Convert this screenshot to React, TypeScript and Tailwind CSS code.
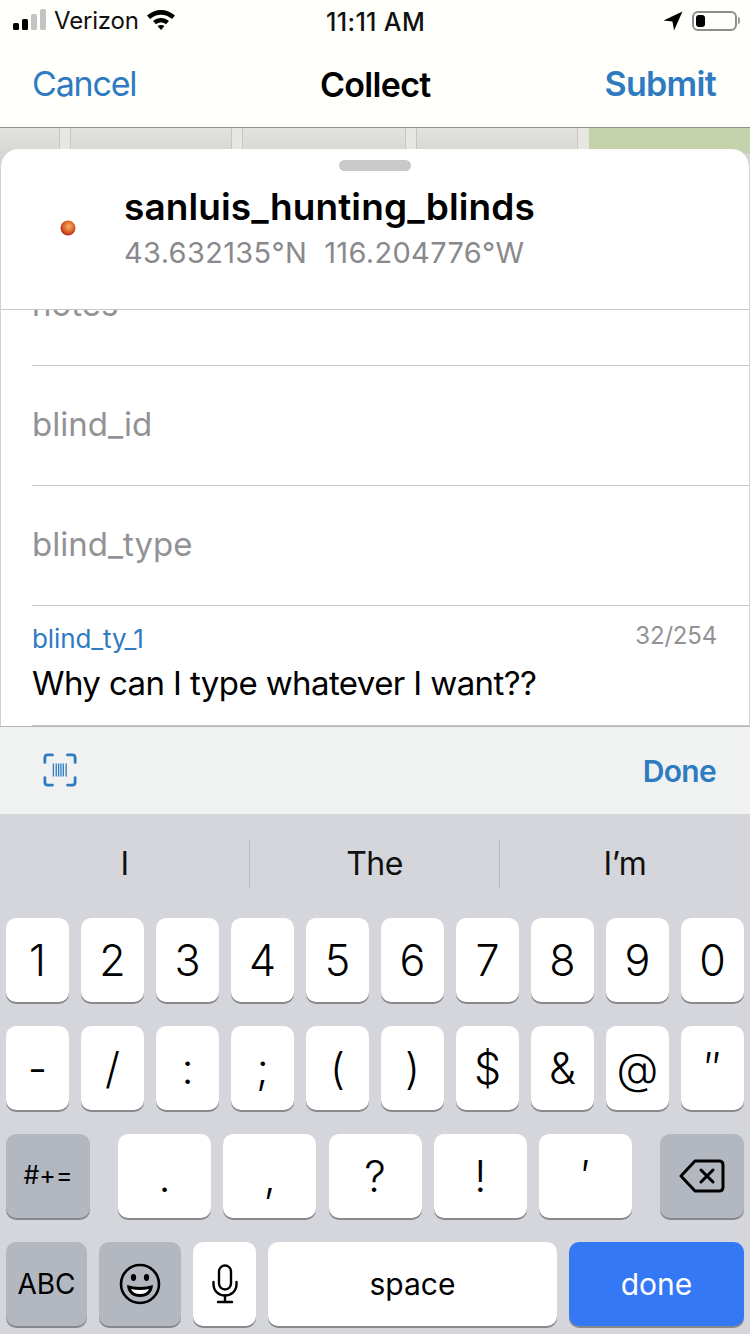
const row1 = ["1", "2", "3", "4", "5", "6", "7", "8", "9", "0"];
const row2 = ["-", "/", ":", ";", "(", ")", "$", "&", "@", "″"];
const row3 = [".", ",", "?", "!", "′"];

function Key({ label, className = "" }: { label: string; className?: string }) {
  return (
    <div
      className={`h-[84px] flex items-center justify-center rounded-[10px] bg-white shadow-[0_2px_0_#88898d] text-[43px] font-light text-black ${className}`}
    >
      {label}
    </div>
  );
}

function FormRow({ label, className = "" }: { label: string; className?: string }) {
  return (
    <div className={`ml-[31px] h-[120px] flex items-center border-b border-[#c8c8cb] pb-[2px] ${className}`}>
      <span className="text-[33px] text-[#929296]">{label}</span>
    </div>
  );
}

export default function App() {
  return (
    <div className="w-[750px] h-[1334px] overflow-hidden bg-white flex flex-col font-['Inter',sans-serif]">
      {/* Status + nav bar */}
      <div className="h-[128px] shrink-0 bg-[#fffffb] border-b border-[#8f928c] flex flex-col">
        <div className="h-[40px] flex items-center justify-between pt-[1px] relative">
          <div className="flex items-center pl-[13px]">
            <svg width="34" height="22" viewBox="0 0 34 22" className="mt-[-1px]">
              <rect x="0" y="14" width="6" height="7" rx="1.5" fill="#000" />
              <rect x="9" y="10" width="6" height="11" rx="1.5" fill="#000" />
              <rect x="18" y="5" width="6" height="16" rx="1.5" fill="#c4c4c4" />
              <rect x="27" y="0" width="6" height="21" rx="1.5" fill="#c4c4c4" />
            </svg>
            <span className="ml-[7px] text-[24px] text-[#111] tracking-[-0.2px]">Verizon</span>
            <svg width="30" height="22" viewBox="0 0 30 22" className="ml-[7px] mt-[-3px]">
              <path d="M1 7.5 C9 0 21 0 29 7.5 L26 11 C19.5 5.2 10.5 5.2 4 11 Z" fill="#000" />
              <path d="M7 13 C11.8 9 18.2 9 23 13 L20 16.3 C17 14 13 14 10 16.3 Z" fill="#000" />
              <path d="M15 22 L11.5 18 C13.5 16.6 16.5 16.6 18.5 18 Z" fill="#000" />
            </svg>
          </div>
          <span className="absolute left-[326px] top-[4px] text-[25px] font-medium text-[#111] tracking-[0.35px]">11:11 AM</span>
          <div className="flex items-center pr-[10px]">
            <svg width="20" height="20" viewBox="0 0 19 19" className="mr-[9px]">
              <path d="M18.5 0.5 L0.5 9 L9 10 L10.5 18.5 Z" fill="#000" />
            </svg>
            <div className="w-[45px] h-[20px] rounded-[6px] border-2 border-[#8d8d8d] p-[2px]">
              <div className="w-[9px] h-full rounded-[3px] bg-black" />
            </div>
            <div className="ml-[1px] w-[2px] h-[7px] rounded-r-sm bg-[#9a9a9a]" />
          </div>
        </div>
        <div className="flex-1 flex items-center justify-between pl-[32px] pr-[34px] relative">
          <span className="text-[34px] text-[#2f7bc1] tracking-[-1.2px]">Cancel</span>
          <span className="absolute left-[320px] top-[19px] text-[34px] font-semibold text-black tracking-[-0.7px]">Collect</span>
          <span className="text-[34px] font-semibold text-[#2f7bc1] tracking-[-0.7px]">Submit</span>
        </div>
      </div>

      {/* Map strip peeking behind the sheet */}
      <div className="h-[40px] shrink-0 flex bg-gradient-to-b from-[#e2e3df] to-[#d0d1cd]">
        <div className="w-[60px] border-r border-[#c6c7c3]" />
        <div className="w-[11px] bg-[#e6e6e3] border-r border-[#c6c7c3]" />
        <div className="w-[161px] border-r border-[#c6c7c3]" />
        <div className="w-[11px] bg-[#e6e6e3] border-r border-[#c6c7c3]" />
        <div className="w-[163px] border-r border-[#c6c7c3]" />
        <div className="w-[11px] bg-[#e6e6e3] border-r border-[#c6c7c3]" />
        <div className="w-[161px] border-r border-[#c6c7c3]" />
        <div className="w-[11px] bg-[#e6e6e3]" />
        <div className="flex-1 h-[25px] bg-[#c3d2ab]" />
      </div>

      {/* Sheet */}
      <div className="-mt-[19px] relative h-[577px] shrink-0 flex flex-col bg-white rounded-t-[18px] border-x border-[#d2d2d2] overflow-hidden">
        <div className="h-[161px] shrink-0 flex flex-col border-b border-[#c8c8cb]">
          <div className="mt-[11px] mx-auto w-[72px] h-[11px] rounded-full bg-[#c9c9c9]" />
          <div className="flex items-start mt-[14px]">
            <svg width="16" height="16" viewBox="0 0 16 16" className="ml-[59px] mt-[35px]">
              <defs>
                <radialGradient id="pin" cx="55%" cy="40%" r="60%">
                  <stop offset="0%" stopColor="#f4b56b" />
                  <stop offset="55%" stopColor="#e0682a" />
                  <stop offset="100%" stopColor="#b02c1a" />
                </radialGradient>
              </defs>
              <circle cx="8" cy="8" r="7.5" fill="url(#pin)" />
            </svg>
            <div className="ml-[48px] flex flex-col">
              <span className="text-[37px] leading-[44px] font-semibold text-black tracking-[0.1px]">sanluis_hunting_blinds</span>
              <span className="text-[29px] leading-[36px] mt-[6px] text-[#89898d] tracking-[0.33px] whitespace-pre">43.632135°N  116.204776°W</span>
            </div>
          </div>
        </div>
        <div className="flex-1 overflow-hidden">
          <FormRow label="notes" className="-mt-[64px]" />
          <FormRow label="blind_id" />
          <FormRow label="blind_type" />
          <div className="ml-[31px] h-[120px] flex flex-col border-b border-[#c8c8cb]">
            <div className="flex items-start justify-between pr-[32px] pt-[16px]">
              <span className="text-[26px] leading-[34px] text-[#2f7bc1] tracking-[-0.1px]">blind_ty_1</span>
              <span className="text-[24px] leading-[28px] text-[#929296] tracking-[-0.2px]">32/254</span>
            </div>
            <span className="text-[33px] leading-[40px] mt-[7px] text-black tracking-[-0.6px]">Why can I type whatever I want??</span>
          </div>
        </div>
      </div>

      {/* Toolbar */}
      <div className="h-[88px] shrink-0 flex items-center justify-between pl-[43px] pr-[34px] bg-[#f0f2f2] border-t border-[#b4b5b5]">
        <svg width="34" height="34" viewBox="0 0 36 36" fill="none" stroke="#2f7bc1" strokeWidth="3" strokeLinecap="round" className="mb-[2px]">
          <path d="M10 2 H5 Q2 2 2 5 V10" />
          <path d="M26 2 H31 Q34 2 34 5 V10" />
          <path d="M2 26 V31 Q2 34 5 34 H10" />
          <path d="M34 26 V31 Q34 34 31 34 H26" />
          <path d="M11 11 V25 M14 11 V25 M16.5 11 V25 M19 11 V25 M21.5 11 V25 M24.5 11 V25" strokeWidth="1.4" strokeLinecap="butt" />
        </svg>
        <span className="text-[30px] font-semibold text-[#2f7bc1] tracking-[-0.7px] mt-[2px]">Done</span>
      </div>

      {/* Keyboard */}
      <div className="flex-1 bg-[#d4d6db] flex flex-col">
        <div className="flex h-[48px] mt-[26px] mb-[30px]">
          {["I", "The", "I’m"].map((s, i) => (
            <div
              key={s}
              className={`w-[250px] flex items-center justify-center text-[32px] text-[#111] tracking-[-0.5px] ${i < 2 ? "border-r border-[#b9bbc0]" : ""}`}
            >
              {s}
            </div>
          ))}
        </div>
        <div className="flex flex-col gap-[24px] px-[6px]">
          <div className="flex gap-[12px]">
            {row1.map((k) => (
              <Key key={k} label={k} className="w-[63px]" />
            ))}
          </div>
          <div className="flex gap-[12px]">
            {row2.map((k) => (
              <Key key={k} label={k} className="w-[63px]" />
            ))}
          </div>
          <div className="flex">
            <Key label="#+=" className="w-[84px] !bg-[#b3b7bf] !text-[25px] !font-normal" />
            <div className="flex gap-[12.25px] ml-[28px]">
              {row3.map((k) => (
                <Key key={k} label={k} className="w-[93px]" />
              ))}
            </div>
            <div className="ml-auto w-[84px] h-[84px] flex items-center justify-center rounded-[10px] bg-[#b3b7bf] shadow-[0_2px_0_#88898d]">
              <svg width="46" height="34" viewBox="0 0 46 34" fill="none" stroke="#000" strokeWidth="3" strokeLinejoin="round" strokeLinecap="round">
                <path d="M16 2 H40 Q44 2 44 6 V28 Q44 32 40 32 H16 L2 17 Z" />
                <path d="M22 11 L34 23 M34 11 L22 23" />
              </svg>
            </div>
          </div>
          <div className="flex gap-[12px]">
            <Key label="ABC" className="w-[81px] !bg-[#b3b7bf] !text-[28px] !font-normal" />
            <div className="w-[82px] h-[84px] flex items-center justify-center rounded-[10px] bg-[#b3b7bf] shadow-[0_2px_0_#88898d]">
              <svg width="42" height="42" viewBox="0 0 42 42" fill="none" stroke="#000" strokeWidth="2.6">
                <circle cx="21" cy="21" r="19" />
                <ellipse cx="14.5" cy="14.5" rx="2.6" ry="3.4" fill="#000" stroke="none" />
                <ellipse cx="27.5" cy="14.5" rx="2.6" ry="3.4" fill="#000" stroke="none" />
                <path d="M8 22 Q21 26 34 22 Q33 34 21 34 Q9 34 8 22 Z" fill="#000" stroke="none" />
                <path d="M12 26 Q21 28 30 26 Q28 31 21 31 Q14 31 12 26 Z" fill="#fff" stroke="none" />
              </svg>
            </div>
            <div className="w-[63px] h-[84px] flex items-center justify-center rounded-[10px] bg-white shadow-[0_2px_0_#88898d]">
              <svg width="26" height="40" viewBox="0 0 26 40" fill="none" stroke="#000" strokeWidth="2.4" strokeLinecap="round">
                <rect x="7" y="1.5" width="12" height="24" rx="6" />
                <path d="M1.5 18 V20 C1.5 27 6.5 31.5 13 31.5 C19.5 31.5 24.5 27 24.5 20 V18" />
                <path d="M13 31.5 V38 M6 38 H20" />
              </svg>
            </div>
            <Key label="space" className="w-[289px] !text-[30px] !font-normal" />
            <Key label="done" className="w-[175px] !bg-[#3478f6] !text-white !text-[30px] !font-normal" />
          </div>
        </div>
      </div>
    </div>
  );
}
